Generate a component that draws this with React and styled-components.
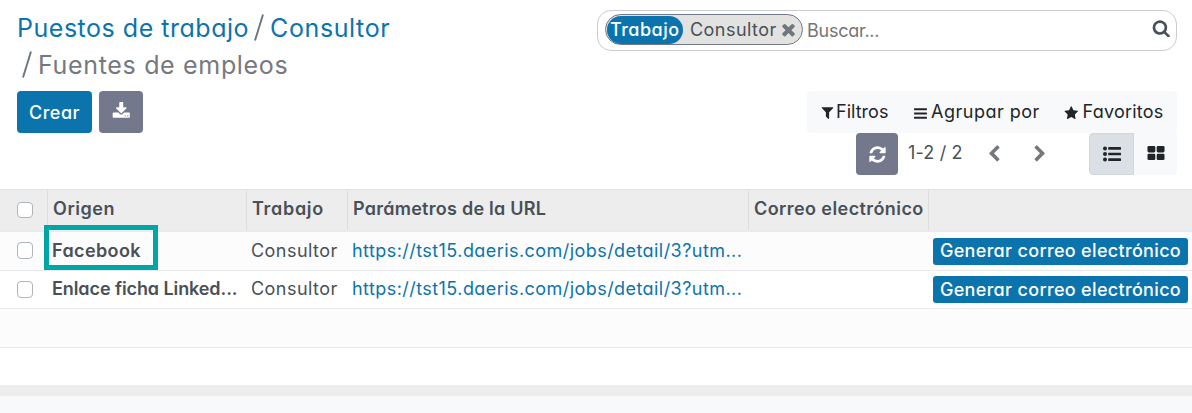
import React from "react";
import styled, { createGlobalStyle } from "styled-components";

const GlobalStyle = createGlobalStyle`
  *, *::before, *::after { box-sizing: border-box; }
  body {
    margin: 0;
    background: #f8f9fb;
    color: #495057;
    font-family: Inter, "Liberation Sans", sans-serif;
    font-feature-settings: "cv11";
    font-size: 18px;
  }
`;

const Page = styled.main`
  height: 413px;
  overflow: hidden;
`;

const Sheet = styled.section`
  height: 385px;
  background: #fff;
`;

const Divider = styled.div`
  height: 11px;
  background: #ededed;
`;

const ControlPanel = styled.header`
  display: flex;
  justify-content: space-between;
  height: 189px;
  padding: 10px 15px 0 17px;
`;

const Side = styled.div`
  display: flex;
  flex-direction: column;
  align-items: ${(p) => (p.$end ? "flex-end" : "flex-start")};
`;

const Text = styled.span`
  white-space: pre;
  letter-spacing: ${(p) => p.$track || 0}px;
`;

const Breadcrumb = styled.nav`
  font-size: 25px;
  font-weight: 370;
  line-height: 37px;
`;

const CrumbLine = styled.div`
  display: flex;
  height: 37px;
  padding-left: ${(p) => p.$indent || 0}px;
`;

const Crumb = styled(Text)`
  color: ${(p) => (p.$link ? "#0b74ad" : "#75797f")};
`;

const Slash = styled.svg`
  width: 10px;
  height: 27px;
  margin: 4px 6px 0 5px;
  stroke: #6c757d;
  stroke-width: 1.9;
`;

const Actions = styled.div`
  display: flex;
  gap: 7px;
  margin-top: 7px;
`;

const Button = styled.button`
  display: flex;
  align-items: center;
  justify-content: center;
  width: ${(p) => p.$width}px;
  height: 42px;
  padding: 0;
  border: 0;
  border-radius: 4px;
  background: ${(p) => (p.$muted ? "#74788d" : "#0b74ad")};
  color: #fff;
  font: 500 18px Inter, sans-serif;
  font-feature-settings: inherit;
`;

const SearchBox = styled.div`
  display: flex;
  align-items: center;
  width: 580px;
  height: 41px;
  padding: 0 6px 0 7px;
  border: 1px solid #ccc;
  border-radius: 14px;
`;

const Facet = styled.div`
  display: flex;
  align-items: center;
  width: 198px;
  height: 31px;
  margin-top: -2px;
  border: 1px solid #74788d;
  border-radius: 16px;
  background: #e2e2e0;
`;

const FacetLabel = styled.div`
  display: flex;
  align-items: center;
  width: 76px;
  height: 28px;
  margin: 0 7px 0 1px;
  padding-left: 3px;
  border-radius: 14px;
  background: #0b74ad;
  color: #fff;
  font-weight: 500;
`;

const FacetValue = styled(Text)`
  width: 87px;
`;

const Placeholder = styled(Text)`
  flex: 1;
  margin-left: 4px;
  color: #757575;
`;

const FilterBar = styled.div`
  display: flex;
  align-items: center;
  width: 370px;
  height: 42px;
  margin-top: 40px;
  padding: 0 0 1px 13px;
  border-radius: 4px;
  background: #f8f9fb;
  color: #212529;
`;

const Filter = styled.div`
  display: flex;
  align-items: center;
  width: ${(p) => p.$width}px;
`;

const PagerRow = styled.div`
  display: flex;
  align-items: center;
  width: 321px;
  height: 42px;
`;

const PageCount = styled(Text)`
  width: 77px;
  margin-left: 10px;
  padding-bottom: 3px;
`;

const PageArrow = styled.div`
  display: flex;
  width: 46px;
  padding-bottom: 1px;
  color: #74777b;
`;

const ViewSwitch = styled.div`
  display: flex;
  margin-left: auto;
`;

const ViewButton = styled.div`
  display: flex;
  align-items: center;
  justify-content: center;
  width: ${(p) => (p.$active ? 45 : 43)}px;
  height: 42px;
  padding: ${(p) => (p.$active ? "0 0 1px 1px" : "0 0 2px")};
  border: ${(p) => (p.$active ? "1px solid #d0d6db" : "0")};
  border-radius: ${(p) => (p.$active ? "4px 0 0 4px" : "0 4px 4px 0")};
  background: ${(p) => (p.$active ? "#dae0e6" : "#f8f9fb")};
  color: #212529;
`;

const Glyph = styled.svg`
  flex: none;
  display: block;
  width: ${(p) => p.$size}px;
  height: ${(p) => p.$size}px;
  margin: ${(p) => p.$margin || 0};
  fill: ${(p) => p.$color || "currentColor"};
`;

const columns = "47px 199px 101px 401px 180px 1fr";

const HeaderRow = styled.div`
  display: grid;
  grid-template-columns: ${columns};
  height: 43px;
  border-top: 1px solid #dee2e6;
  border-bottom: 2px solid #e9ecef;
  background: #ededed;
  font-weight: 600;
`;

const HeaderCell = styled.div`
  display: flex;
  align-items: center;
  padding: 0 0 3px 5px;
  border-left: 1px solid #dcdddf;
`;

const Row = styled.div`
  display: grid;
  grid-template-columns: ${columns};
  height: ${(p) => p.$height}px;
  border-bottom: 1px solid #e7e9eb;
  background: ${(p) => (p.$striped ? "#fcfcfc" : "#fff")};
`;

const Cell = styled.div`
  position: relative;
  display: flex;
  align-items: center;
  padding: 0 0 2px 5px;
  font-weight: ${(p) => (p.$strong ? 600 : 370)};
`;

const CheckCell = styled.div`
  display: flex;
  align-items: center;
  padding: 0 0 1px 17px;
`;

const Checkbox = styled.span`
  width: 16px;
  height: ${(p) => p.$height || 17}px;
  border: 1px solid #adb5bd;
  border-radius: 4px;
  background: #fff;
`;

const Link = styled(Text)`
  color: #0b74ad;
`;

const MailButton = styled.button`
  display: flex;
  align-items: center;
  justify-content: center;
  width: 255px;
  height: 27px;
  margin-top: 2px;
  padding: 0 0 1px;
  border: 0;
  border-radius: 3px;
  background: #0b74ad;
  color: #fff;
  font: 500 18px Inter, sans-serif;
  font-feature-settings: inherit;
`;

const Highlight = styled.div`
  position: absolute;
  z-index: 1;
  top: -7px;
  left: -3px;
  width: 114px;
  height: 45px;
  border: 5px solid #00a5a5;
`;

const paths = {
  times:
    "M1490 1322q0 40-28 68l-136 136q-28 28-68 28t-68-28l-294-294-294 294q-28 28-68 28t-68-28l-136-136q-28-28-28-68t28-68l294-294-294-294q-28-28-28-68t28-68l136-136q28-28 68-28t68 28l294 294 294-294q28-28 68-28t68 28l136 136q28 28 28 68t-28 68l-294 294 294 294q28 28 28 68z",
  search:
    "M1216 832q0-185-131.5-316.5t-316.5-131.5-316.5 131.5-131.5 316.5 131.5 316.5 316.5 131.5 316.5-131.5 131.5-316.5zm512 832q0 52-38 90t-90 38q-54 0-90-38l-343-342q-179 124-399 124-143 0-273.5-55.5t-225-150-150-225-55.5-273.5 55.5-273.5 150-225 225-150 273.5-55.5 273.5 55.5 225 150 150 225 55.5 273.5q0 220-124 399l343 343q37 37 37 90z",
  filter:
    "M1595 295q17 41-14 70l-493 493v742q0 42-39 59-13 5-25 5-27 0-45-19l-256-256q-19-19-19-45v-486l-493-493q-31-29-14-70 17-39 59-39h1280q42 0 59 39z",
  bars:
    "M1664 1344v128q0 26-19 45t-45 19h-1408q-26 0-45-19t-19-45v-128q0-26 19-45t45-19h1408q26 0 45 19t19 45zm0-512v128q0 26-19 45t-45 19h-1408q-26 0-45-19t-19-45v-128q0-26 19-45t45-19h1408q26 0 45 19t19 45zm0-512v128q0 26-19 45t-45 19h-1408q-26 0-45-19t-19-45v-128q0-26 19-45t45-19h1408q26 0 45 19t19 45z",
  star:
    "M1728 647q0 22-26 48l-363 354 86 500q1 7 1 20 0 21-10.5 35.5t-30.5 14.5q-19 0-40-12l-449-236-449 236q-22 12-40 12-21 0-31.5-14.5t-10.5-35.5q0-6 2-20l86-500-364-354q-25-27-25-48 0-37 56-46l502-73 225-455q19-41 49-41t49 41l225 455 502 73q56 9 56 46z",
  refresh:
    "M1639 1056q0 5-1 7-64 268-268 434.5t-478 166.5q-146 0-282.5-55t-243.5-157l-129 129q-19 19-45 19t-45-19-19-45v-448q0-26 19-45t45-19h448q26 0 45 19t19 45-19 45l-137 137q71 66 161 102t187 36q134 0 250-65t186-179q11-17 53-117 8-23 30-23h192q13 0 22.5 9.5t9.5 22.5zm25-800v448q0 26-19 45t-45 19h-448q-26 0-45-19t-19-45 19-45l138-138q-148-137-349-137-134 0-250 65t-186 179q-11 17-53 117-8 23-30 23h-199q-13 0-22.5-9.5t-9.5-22.5v-7q65-268 270-434.5t480-166.5q146 0 284 55.5t245 156.5l130-129q19-19 45-19t45 19 19 45z",
  download:
    "M1344 1344q0-26-19-45t-45-19-45 19-19 45 19 45 45 19 45-19 19-45zm256 0q0-26-19-45t-45-19-45 19-19 45 19 45 45 19 45-19 19-45zm128-224v320q0 40-28 68t-68 28h-1472q-40 0-68-28t-28-68v-320q0-40 28-68t68-28h465l135 136q58 56 136 56t136-56l136-136h464q40 0 68 28t28 68zm-325-569q17 41-14 70l-448 448q-18 19-45 19t-45-19l-448-448q-31-29-14-70 17-39 59-39h256v-448q0-26 19-45t45-19h256q26 0 45 19t19 45v448h256q42 0 59 39z",
  left:
    "M1427 301l-531 531 531 531q19 19 19 45t-19 45l-166 166q-19 19-45 19t-45-19l-742-742q-19-19-19-45t19-45l742-742q19-19 45-19t45 19l166 166q19 19 19 45t-19 45z",
  right:
    "M1363 877l-742 742q-19 19-45 19t-45-19l-166-166q-19-19-19-45t19-45l531-531-531-531q-19-19-19-45t19-45l166-166q19-19 45-19t45 19l742 742q19 19 19 45t-19 45z",
};

const Icon = ({ name, size, margin, color }) => (
  <Glyph viewBox="0 0 1792 1792" $size={size} $margin={margin} $color={color}>
    <path d={paths[name]} />
  </Glyph>
);

const CrumbSlash = () => (
  <Slash viewBox="0 0 10 27">
    <path d="M9 0.5L1 26.5" />
  </Slash>
);

const rows = [
  { name: "Facebook", track: 0.39, height: 39, striped: true, highlighted: true },
  { name: "Enlace ficha Linked...", track: -0.09, height: 38 },
];

export default function App() {
  return (
    <Page>
      <GlobalStyle />
      <Sheet>
        <ControlPanel>
          <Side>
            <Breadcrumb>
              <CrumbLine>
                <Crumb $link $track={0.52}>Puestos de trabajo</Crumb>
                <CrumbSlash />
                <Crumb $link $track={0.6}>Consultor</Crumb>
              </CrumbLine>
              <CrumbLine>
                <CrumbSlash />
                <Crumb $track={0.67}>Fuentes de empleos</Crumb>
              </CrumbLine>
            </Breadcrumb>
            <Actions>
              <Button $width={75}>
                <Text $track={0.504}>Crear</Text>
              </Button>
              <Button $width={44} $muted>
                <Icon name="download" size={18.5} margin="0 0 2px" />
              </Button>
            </Actions>
          </Side>
          <Side $end>
            <SearchBox>
              <Facet>
                <FacetLabel>
                  <Text $track={0.5}>Trabajo</Text>
                </FacetLabel>
                <FacetValue $track={0.45}>Consultor</FacetValue>
                <Icon name="times" size={19} margin="0 0 0 2px" color="#6f767d" />
              </Facet>
              <Placeholder $track={-0.25}>Buscar...</Placeholder>
              <Icon name="search" size={18.5} margin="0 0 5px" color="#495057" />
            </SearchBox>
            <FilterBar>
              <Filter $width={93}>
                <Icon name="filter" size={15} margin="2px 1px 0 0" />
                <Text $track={0.03}>Filtros</Text>
              </Filter>
              <Filter $width={151}>
                <Icon name="bars" size={15} margin="3px 3px 0 0" />
                <Text $track={0.5}>Agrupar por</Text>
              </Filter>
              <Filter>
                <Icon name="star" size={14.5} margin="3px 4px 0 0" />
                <Text $track={0.24}>Favoritos</Text>
              </Filter>
            </FilterBar>
            <PagerRow>
              <Button $width={42} $muted>
                <Icon name="refresh" size={19} />
              </Button>
              <PageCount $track={0.15}>1-2 / 2</PageCount>
              <PageArrow>
                <Icon name="left" size={18} />
              </PageArrow>
              <PageArrow>
                <Icon name="right" size={18} />
              </PageArrow>
              <ViewSwitch>
                <ViewButton $active>
                  <Glyph viewBox="0 0 18 18" $size={18}>
                    <circle cx="2" cy="3.4" r="2" />
                    <circle cx="2" cy="9" r="2" />
                    <circle cx="2" cy="14.6" r="2" />
                    <rect x="5.2" y="2.1" width="12.8" height="2.6" rx="0.4" />
                    <rect x="5.2" y="7.7" width="12.8" height="2.6" rx="0.4" />
                    <rect x="5.2" y="13.3" width="12.8" height="2.6" rx="0.4" />
                  </Glyph>
                </ViewButton>
                <ViewButton>
                  <Glyph viewBox="0 0 18 18" $size={18}>
                    <rect x="0.5" y="2" width="7.8" height="6.4" rx="1.3" />
                    <rect x="9.7" y="2" width="7.8" height="6.4" rx="1.3" />
                    <rect x="0.5" y="9.7" width="7.8" height="6.4" rx="1.3" />
                    <rect x="9.7" y="9.7" width="7.8" height="6.4" rx="1.3" />
                  </Glyph>
                </ViewButton>
              </ViewSwitch>
            </PagerRow>
          </Side>
        </ControlPanel>

        <HeaderRow>
          <CheckCell>
            <Checkbox $height={16} />
          </CheckCell>
          <HeaderCell><Text $track={0.55}>Origen</Text></HeaderCell>
          <HeaderCell><Text $track={0.7}>Trabajo</Text></HeaderCell>
          <HeaderCell><Text $track={0.26}>Parámetros de la URL</Text></HeaderCell>
          <HeaderCell><Text $track={0.42}>Correo electrónico</Text></HeaderCell>
          <HeaderCell />
        </HeaderRow>
        {rows.map((r) => (
          <Row key={r.name} $height={r.height} $striped={r.striped}>
            <CheckCell>
              <Checkbox />
            </CheckCell>
            <Cell $strong>
              <Text $track={r.track}>{r.name}</Text>
              {r.highlighted && <Highlight />}
            </Cell>
            <Cell><Text $track={0.45}>Consultor</Text></Cell>
            <Cell><Link $track={0.44}>https://tst15.daeris.com/jobs/detail/3?utm...</Link></Cell>
            <Cell />
            <Cell>
              <MailButton>
                <Text $track={0.33}>Generar correo electrónico</Text>
              </MailButton>
            </Cell>
          </Row>
        ))}
        <Row $height={39} $striped />
      </Sheet>
      <Divider />
    </Page>
  );
}
